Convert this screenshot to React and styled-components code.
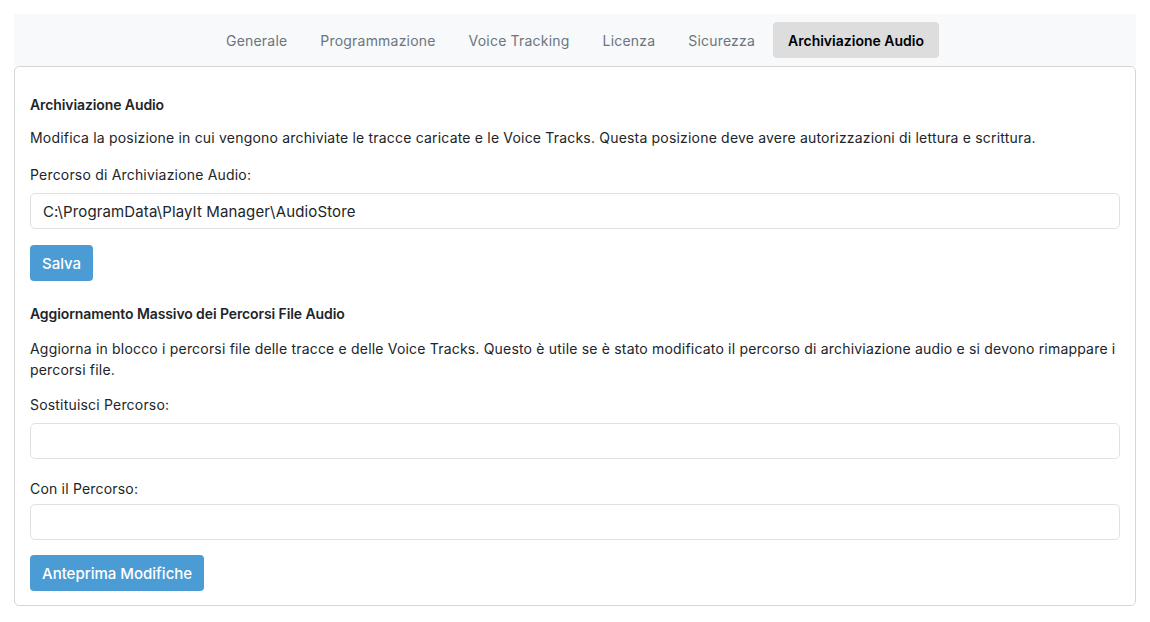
import React from "react";
import styled, { createGlobalStyle } from "styled-components";

const Global = createGlobalStyle`
  html, body { margin: 0; padding: 0; background: #fff; }
  body { font-family: Inter, "Noto Sans", sans-serif; color: #212529; }
  * { box-sizing: border-box; }
`;

const Page = styled.div`
  padding: 14px;
`;

const TabBar = styled.nav`
  background: #f8f9fa;
  padding: 8px 0;
  display: flex;
  justify-content: center;
  gap: 3px;
`;

const Tab = styled.button`
  height: 36px;
  padding: 0 15px;
  border: none;
  border-radius: 4px;
  font-family: inherit;
  font-size: 14px;
  letter-spacing: ${(p) => (p.$active ? "0" : "0.2px")};
  background: ${(p) => (p.$active ? "#dddddd" : "transparent")};
  color: ${(p) => (p.$active ? "#000" : "#6c757d")};
  font-weight: ${(p) => (p.$active ? 600 : 400)};
  cursor: pointer;
`;

const Card = styled.section`
  border: 1px solid #d6d6d6;
  border-radius: 5px;
  padding: 27px 15px 14px;
`;

const Heading = styled.h3`
  margin: 0 0 ${(p) => p.$mb}px;
  font-size: 14px;
  line-height: 21px;
  font-weight: 600;
  letter-spacing: -0.1px;
`;

const Text = styled.p`
  margin: 0 0 ${(p) => p.$mb}px;
  font-size: 14px;
  line-height: 21px;
  letter-spacing: 0.19px;
`;

const Label = styled.label`
  display: block;
  margin: 0 0 ${(p) => p.$mb}px;
  font-size: 14px;
  line-height: 21px;
  letter-spacing: 0.19px;
`;

const Input = styled.input`
  display: block;
  width: 100%;
  height: 36px;
  margin: 0 0 ${(p) => p.$mb}px;
  padding: 0 12px;
  border: 1px solid #dee2e6;
  border-radius: 5px;
  font-family: inherit;
  font-size: 15px;
  letter-spacing: 0.12px;
  color: #212529;
  background: #fff;
  outline: none;
`;

const Button = styled.button`
  display: block;
  height: 36px;
  margin: 0 0 ${(p) => p.$mb}px;
  padding: 0 12px;
  border: none;
  border-radius: 4px;
  background: #4b9cd5;
  color: #fff;
  font-family: inherit;
  font-size: 15px;
  font-weight: 500;
  cursor: pointer;
`;

const tabs = [
  "Generale",
  "Programmazione",
  "Voice Tracking",
  "Licenza",
  "Sicurezza",
  "Archiviazione Audio",
];

export default function App() {
  return (
    <Page>
      <Global />
      <TabBar>
        {tabs.map((t) => (
          <Tab key={t} $active={t === "Archiviazione Audio"}>
            {t}
          </Tab>
        ))}
      </TabBar>
      <Card>
        <Heading $mb={12}>Archiviazione Audio</Heading>
        <Text $mb={16}>
          Modifica la posizione in cui vengono archiviate le tracce caricate e le Voice Tracks. Questa posizione deve avere autorizzazioni di lettura e scrittura.
        </Text>
        <Label $mb={8}>Percorso di Archiviazione Audio:</Label>
        <Input $mb={16} defaultValue={"C:\\ProgramData\\PlayIt Manager\\AudioStore"} />
        <Button $mb={22}>Salva</Button>
        <Heading $mb={14}>Aggiornamento Massivo dei Percorsi File Audio</Heading>
        <Text $mb={14}>
          Aggiorna in blocco i percorsi file delle tracce e delle Voice Tracks. Questo è utile se è stato modificato il percorso di archiviazione audio e si devono rimappare i percorsi file.
        </Text>
        <Label $mb={8}>Sostituisci Percorso:</Label>
        <Input $mb={19} />
        <Label $mb={5}>Con il Percorso:</Label>
        <Input $mb={15} />
        <Button $mb={0}>Anteprima Modifiche</Button>
      </Card>
    </Page>
  );
}
